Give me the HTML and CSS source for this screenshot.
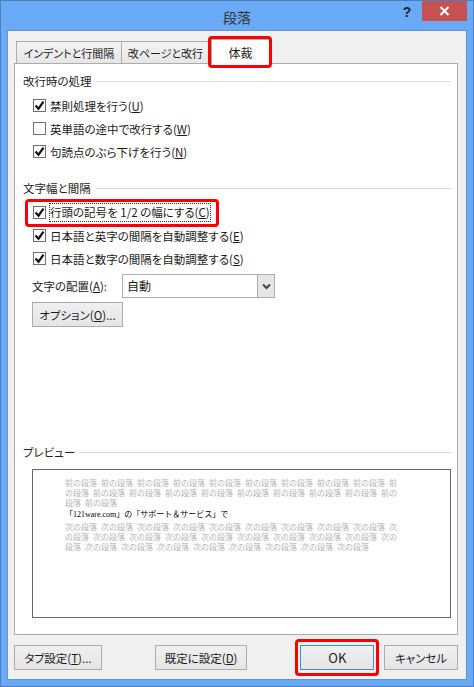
FILE: index.html
```html
<!DOCTYPE html>
<html lang="ja">
<head>
    <meta charset="utf-8">
    <title>段落</title>
    <link rel="stylesheet" href="styles.css">
</head>
<body>
    <div class="window">
        <div class="titlebar">
            <div></div>
            <div class="title">段落</div>
            <div class="controls">
                <span class="help">?</span>
                <span class="close">
                    <svg width="11" height="10" viewBox="0 0 11 10"><path d="M1.5 1l8 8M9.5 1l-8 8" stroke="#fff" stroke-width="2" fill="none"/></svg>
                </span>
            </div>
        </div>

        <div class="client">
            <div class="tabs">
                <div class="tab tab-first">インデントと行間隔</div>
                <div class="tab tab-second">改ページと改行</div>
                <div class="tab tab-active marked">体裁</div>
            </div>

            <div class="page">
                <div class="group-title"><span>改行時の処理</span></div>
                <div class="rows">
                    <div class="row">
                        <span class="check"><svg width="11" height="11" viewBox="0 0 11 11"><path d="M1.5 5.5l3 3.2 5-7" stroke="#111" stroke-width="2.2" fill="none"/></svg></span>
                        <span>禁則処理を行う(<u>U</u>)</span>
                    </div>
                    <div class="row">
                        <span class="check"></span>
                        <span>英単語の途中で改行する(<u>W</u>)</span>
                    </div>
                    <div class="row">
                        <span class="check"><svg width="11" height="11" viewBox="0 0 11 11"><path d="M1.5 5.5l3 3.2 5-7" stroke="#111" stroke-width="2.2" fill="none"/></svg></span>
                        <span>句読点のぶら下げを行う(<u>N</u>)</span>
                    </div>
                </div>

                <div class="group-title second"><span>文字幅と間隔</span></div>
                <div class="rows">
                    <div class="row marked">
                        <span class="check"><svg width="11" height="11" viewBox="0 0 11 11"><path d="M1.5 5.5l3 3.2 5-7" stroke="#111" stroke-width="2.2" fill="none"/></svg></span>
                        <span class="focused">行頭の記号を 1/2 の幅にする(<u>C</u>)</span>
                    </div>
                    <div class="row">
                        <span class="check"><svg width="11" height="11" viewBox="0 0 11 11"><path d="M1.5 5.5l3 3.2 5-7" stroke="#111" stroke-width="2.2" fill="none"/></svg></span>
                        <span>日本語と英字の間隔を自動調整する(<u>E</u>)</span>
                    </div>
                    <div class="row">
                        <span class="check"><svg width="11" height="11" viewBox="0 0 11 11"><path d="M1.5 5.5l3 3.2 5-7" stroke="#111" stroke-width="2.2" fill="none"/></svg></span>
                        <span>日本語と数字の間隔を自動調整する(<u>S</u>)</span>
                    </div>
                </div>

                <div class="select-row">
                    <span class="select-label">文字の配置(<u>A</u>):</span>
                    <div class="select">
                        <span class="select-value">自動</span>
                        <span class="select-arrow"><svg width="9" height="7" viewBox="0 0 9 7"><path d="M1 1.5l3.5 3.5 3.5-3.5" stroke="#444" stroke-width="2" fill="none"/></svg></span>
                    </div>
                </div>
                <button class="btn btn-options">オプション(<u>O</u>)...</button>

                <div class="preview">
                    <div class="group-title"><span>プレビュー</span></div>
                    <div class="preview-box">
                        <p class="sample-gray">前の段落 前の段落 前の段落 前の段落 前の段落 前の段落 前の段落 前の段落 前の段落 前の段落 前の段落 前の段落 前の段落 前の段落 前の段落 前の段落 前の段落 前の段落 前の段落 前の段落</p>
                        <p class="sample-main">「121ware.com」の「サポート＆サービス」で</p>
                        <p class="sample-gray">次の段落 次の段落 次の段落 次の段落 次の段落 次の段落 次の段落 次の段落 次の段落 次の段落 次の段落 次の段落 次の段落 次の段落 次の段落 次の段落 次の段落 次の段落 次の段落 次の段落 次の段落 次の段落 次の段落 次の段落 次の段落 次の段落 次の段落</p>
                    </div>
                </div>
            </div>

            <div class="footer">
                <button class="btn btn-tabs">タブ設定(<u>T</u>)...</button>
                <button class="btn btn-default">既定に設定(<u>D</u>)</button>
                <button class="btn btn-ok marked">OK</button>
                <button class="btn btn-cancel">キャンセル</button>
            </div>
        </div>
    </div>
</body>
</html>
```

FILE: styles.css
```css
* {
    margin: 0;
    padding: 0;
    box-sizing: border-box;
}

body {
    width: 474px;
    height: 687px;
    overflow: hidden;
    font-family: "Noto Sans CJK JP", "Noto Sans", sans-serif;
    font-size: 11.5px;
    color: #1a1a1a;
    font-feature-settings: "palt";
}

.window {
    width: 474px;
    height: 687px;
    display: flex;
    flex-direction: column;
    background: #69a9f5;
    border: 1px solid #4a80bd;
}

/* title bar */
.titlebar {
    height: 29px;
    flex-shrink: 0;
    display: grid;
    grid-template-columns: 1fr auto 1fr;
}

.title {
    padding-top: 6px;
    font-size: 14px;
    line-height: 20px;
    color: #333;
}

.controls {
    display: flex;
    justify-content: flex-end;
    align-items: flex-start;
}

.help {
    width: 16px;
    margin-right: 7px;
    padding-top: 2px;
    font-family: "Liberation Sans", sans-serif;
    font-size: 14px;
    font-weight: bold;
    line-height: 18px;
    text-align: center;
    color: #222;
}

.close {
    width: 45px;
    height: 20px;
    margin-right: 6px;
    display: flex;
    justify-content: center;
    align-items: center;
    background: #c75050;
}

/* dialog body */
.client {
    flex: 1;
    display: flex;
    flex-direction: column;
    margin: 0 6px 6px;
    padding: 8px 8px 9px 6px;
    background: #f0f0f0;
    border: 1px solid #5c97d8;
}

.tabs {
    height: 24px;
    display: flex;
    align-items: flex-end;
    flex-shrink: 0;
    position: relative;
    z-index: 1;
}

.tab {
    height: 22px;
    display: flex;
    justify-content: center;
    align-items: center;
    background: linear-gradient(#f3f3f3, #e6e6e6);
    border: 1px solid #acacac;
    border-bottom: none;
    font-size: 11px;
}

.tab-first {
    width: 106px;
    margin-left: 2px;
}

.tab-second {
    width: 89px;
    margin-left: -1px;
}

.tab-active {
    width: 59px;
    height: 25px;
    margin-left: 1px;
    margin-bottom: -1px;
    background: #fff;
    font-size: 12px;
}

.page {
    flex: 1;
    display: flex;
    flex-direction: column;
    padding: 7px 6px 16px 8px;
    background: #fff;
    border: 1px solid #acacac;
}

.group-title {
    height: 20px;
    display: flex;
    align-items: center;
    gap: 5px;
    color: #222;
}

.group-title::after {
    content: "";
    flex: 1;
    height: 1px;
    background: #dcdcdc;
}

.second {
    margin-top: 15px;
}

.rows {
    margin-top: 3px;
}

.row {
    height: 23px;
    width: fit-content;
    margin-left: 10px;
    display: flex;
    align-items: center;
    gap: 4px;
}

.check {
    width: 13px;
    height: 13px;
    display: flex;
    justify-content: center;
    align-items: center;
    background: #fff;
    border: 1px solid #707070;
}

.focused {
    outline: 1px dotted #333;
    line-height: 17px;
}

u {
    text-underline-offset: 1px;
}

.select-row {
    margin: 4px 0 0 9px;
    display: flex;
    align-items: center;
}

.select-label {
    width: 90px;
}

.select {
    width: 153px;
    height: 24px;
    display: flex;
    justify-content: space-between;
    background: #fff;
    border: 1px solid #abadb3;
}

.select-value {
    padding-left: 4px;
    line-height: 21px;
    font-size: 12px;
}

.select-arrow {
    width: 17px;
    display: flex;
    justify-content: center;
    align-items: center;
    background: #e5e5e5;
    border-left: 1px solid #acacac;
}

.btn {
    height: 25px;
    font-family: inherit;
    font-size: 11.5px;
    font-feature-settings: inherit;
    color: #1a1a1a;
    background: linear-gradient(#f0f0f0, #e5e5e5);
    border: 1px solid #acacac;
}

.btn-options {
    width: 91px;
    margin: 4px 0 0 9px;
}

/* preview */
.preview {
    margin-top: auto;
}

.preview-box {
    height: 149px;
    margin: 7px 0 0 9px;
    padding: 8px 52px 0 32px;
    background: #fff;
    border: 1px solid #696969;
    font-size: 8px;
    line-height: 10px;
    font-feature-settings: normal;
    word-break: break-all;
}

.sample-gray {
    color: #b4b4b4;
    word-spacing: 2.2px;
}

.sample-main {
    margin: 2px 0;
    color: #000;
    font-family: "Liberation Serif", "Noto Sans CJK JP", serif;
    white-space: nowrap;
}

/* bottom buttons */
.footer {
    margin-top: 10px;
    display: flex;
    flex-shrink: 0;
}

.btn-tabs {
    width: 88px;
}

.btn-default {
    width: 93px;
    margin-left: 53px;
}

.btn-ok {
    width: 74px;
    margin-left: 53px;
    border-color: #3d8fdc;
    font-size: 13px;
}

.btn-cancel {
    width: 74px;
    margin-left: 10px;
}

/* red callouts drawn over the screenshot */
.marked {
    position: relative;
}

.marked::after {
    content: "";
    position: absolute;
    border: 3px solid #f00;
    border-radius: 4px;
    pointer-events: none;
}

.tab-active::after {
    inset: -4px -3px -4px -4px;
}

.row::after {
    inset: -2px -9px -3px -8px;
}

.btn-ok::after {
    inset: -7px -6px -7px -6px;
}
```
